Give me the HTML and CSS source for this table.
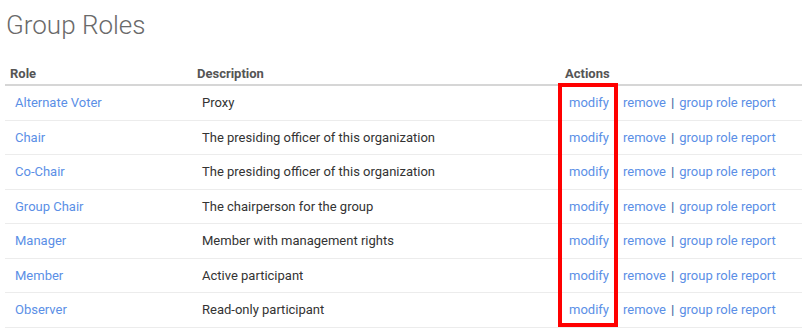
FILE: index.html
```html
<!DOCTYPE html>
<html lang="en">
<head>
<meta charset="utf-8">
<title>Group Roles</title>
<link rel="stylesheet" href="styles.css">
</head>
<body>
<div class="page">
  <h1 class="title">Group Roles</h1>
  <div class="table-wrap">
    <table class="roles">
      <colgroup>
        <col class="c-role">
        <col class="c-desc">
        <col class="c-act">
      </colgroup>
      <thead>
        <tr><th>Role</th><th>Description</th><th>Actions</th></tr>
      </thead>
      <tbody>
        <tr><td><a href="#">Alternate Voter</a></td><td>Proxy</td><td class="acts"><a class="mod" href="#">modify</a><a href="#">remove</a><span class="sep">|</span><a href="#">group role report</a></td></tr>
        <tr><td><a href="#">Chair</a></td><td>The presiding officer of this organization</td><td class="acts"><a class="mod" href="#">modify</a><a href="#">remove</a><span class="sep">|</span><a href="#">group role report</a></td></tr>
        <tr><td><a href="#">Co-Chair</a></td><td>The presiding officer of this organization</td><td class="acts"><a class="mod" href="#">modify</a><a href="#">remove</a><span class="sep">|</span><a href="#">group role report</a></td></tr>
        <tr><td><a href="#">Group Chair</a></td><td>The chairperson for the group</td><td class="acts"><a class="mod" href="#">modify</a><a href="#">remove</a><span class="sep">|</span><a href="#">group role report</a></td></tr>
        <tr><td><a href="#">Manager</a></td><td>Member with management rights</td><td class="acts"><a class="mod" href="#">modify</a><a href="#">remove</a><span class="sep">|</span><a href="#">group role report</a></td></tr>
        <tr><td><a href="#">Member</a></td><td>Active participant</td><td class="acts"><a class="mod" href="#">modify</a><a href="#">remove</a><span class="sep">|</span><a href="#">group role report</a></td></tr>
        <tr><td><a href="#">Observer</a></td><td>Read-only participant</td><td class="acts"><a class="mod" href="#">modify</a><a href="#">remove</a><span class="sep">|</span><a href="#">group role report</a></td></tr>
      </tbody>
    </table>
    <div class="highlight"></div>
  </div>
</div>
</body>
</html>
```

FILE: styles.css
```css
html, body {
  margin: 0;
  padding: 0;
  background: #ffffff;
}

.page {
  padding: 0 7px 0 5px;
  font-family: Roboto, "Noto Sans", sans-serif;
}

.title {
  margin: 0;
  padding: 9px 0 0 1px;
  height: 62px;
  box-sizing: border-box;
  font-size: 26px;
  font-weight: 300;
  line-height: 32px;
  color: #6a6a6a;
}

.table-wrap {
  position: relative;
}

.roles {
  width: 797px;
  border-collapse: collapse;
  table-layout: fixed;
  font-size: 13px;
}

.c-role { width: 188px; }
.c-desc { width: 368px; }
.c-act { width: 241px; }

.roles th {
  text-align: left;
  font-weight: 700;
  color: #555555;
  height: 22px;
  padding: 0 5px;
  vertical-align: middle;
  border-bottom: 2px solid #d6d6d6;
}

.roles th:nth-child(2),
.roles th:nth-child(3) { padding-left: 4px; }

.roles td {
  height: 33.5px;
  padding: 0 9px;
  color: #333333;
  border-bottom: 1px solid #ececec;
  white-space: nowrap;
}

.roles td:first-child { padding-left: 10px; }
.roles td.acts { padding-left: 8px; }

.roles a {
  color: #5b8fe6;
  text-decoration: none;
}

.acts .mod { margin-right: 14px; }

.sep {
  color: #4a6fa5;
  font-weight: 700;
  margin: 0 5px;
}

.highlight {
  position: absolute;
  left: 553px;
  top: 21px;
  width: 52px;
  height: 236px;
  border: 4px solid #ff0000;
}
```
